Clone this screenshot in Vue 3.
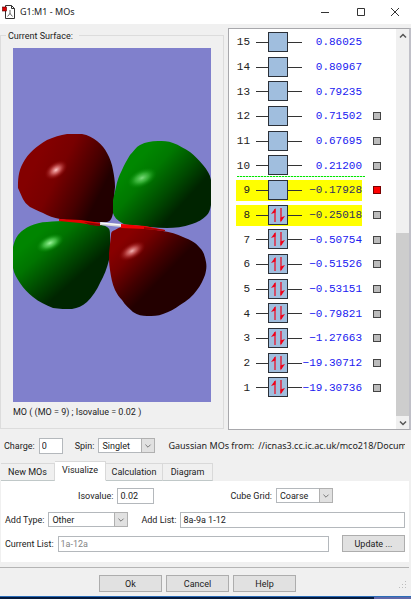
<script setup>
import { ref } from 'vue'

const orbitals = ref([
  { n: 15, energy: '0.86025', pair: false },
  { n: 14, energy: '0.80967', pair: false },
  { n: 13, energy: '0.79235', pair: false },
  { n: 12, energy: '0.71502', pair: false, box: true },
  { n: 11, energy: '0.67695', pair: false, box: true },
  { n: 10, energy: '0.21200', pair: false, box: true },
  { n: 9, energy: '−0.17928', pair: false, box: true, shown: true, lit: true, gap: true },
  { n: 8, energy: '−0.25018', pair: true, box: true, lit: true },
  { n: 7, energy: '−0.50754', pair: true, box: true },
  { n: 6, energy: '−0.51526', pair: true, box: true },
  { n: 5, energy: '−0.53151', pair: true, box: true },
  { n: 4, energy: '−0.79821', pair: true, box: true },
  { n: 3, energy: '−1.27663', pair: true, box: true },
  { n: 2, energy: '−19.30712', pair: true, box: true },
  { n: 1, energy: '−19.30736', pair: true, box: true }
])

const tabs = ['New MOs', 'Visualize', 'Calculation', 'Diagram']
const activeTab = ref('Visualize')
const charge = ref('0')
const isovalue = ref('0.02')
const addList = ref('8a-9a 1-12')
const currentList = ref('1a-12a')
</script>

<template>
  <div class="window">
    <header class="titlebar">
      <svg class="app-icon" width="14" height="15" viewBox="0 0 14 15">
        <path d="M3.5 0.5h6l3 3v10h-9z" fill="#fff" stroke="#333" />
        <path d="M9.500 0.500v3h3" fill="none" stroke="#333" />
        <path d="M8 5v4M8 8.500l-2.500 3M8 8.500l2.500 3" fill="none" stroke="#666" />
        <rect x="0.500" y="2" width="4" height="4" fill="#e00000" stroke="#500" stroke-width="0.600" />
      </svg>
      <h1>G1:M1 - MOs</h1>
      <div class="window-buttons">
        <button aria-label="Minimize"><svg width="10" height="10" viewBox="0 0 10 10"><path d="M1 5.500h8" /></svg></button>
        <button aria-label="Maximize"><svg width="10" height="10" viewBox="0 0 10 10"><path d="M1.500 1.500h7v7h-7z" /></svg></button>
        <button aria-label="Close"><svg width="10" height="10" viewBox="0 0 10 10"><path d="M1 1l8 8M9 1l-8 8" /></svg></button>
      </div>
    </header>

    <main class="top">
      <fieldset class="surface">
        <legend>Current Surface:</legend>
        <svg class="viewport" viewBox="13 48 198 354" preserveAspectRatio="xMidYMid slice">
          <defs>
            <linearGradient id="redTop" gradientUnits="userSpaceOnUse" x1="38" y1="158" x2="102" y2="190">
              <stop offset="0" stop-color="#840000" /><stop offset="0.35" stop-color="#780000" /><stop offset="0.75" stop-color="#480000" /><stop offset="1" stop-color="#220000" />
            </linearGradient>
            <linearGradient id="greenTop" gradientUnits="userSpaceOnUse" x1="138" y1="160" x2="184" y2="202">
              <stop offset="0" stop-color="#008700" /><stop offset="0.3" stop-color="#007800" /><stop offset="0.7" stop-color="#004a00" /><stop offset="1" stop-color="#002400" />
            </linearGradient>
            <linearGradient id="greenLow" gradientUnits="userSpaceOnUse" x1="40" y1="232" x2="79" y2="276">
              <stop offset="0" stop-color="#008500" /><stop offset="0.3" stop-color="#007400" /><stop offset="0.7" stop-color="#004600" /><stop offset="1" stop-color="#002500" />
            </linearGradient>
            <linearGradient id="redLow" gradientUnits="userSpaceOnUse" x1="125" y1="238" x2="164" y2="276">
              <stop offset="0" stop-color="#880000" /><stop offset="0.3" stop-color="#740000" /><stop offset="0.7" stop-color="#420000" /><stop offset="1" stop-color="#230000" />
            </linearGradient>
            <radialGradient id="glowRed">
              <stop offset="0" stop-color="#ffc4c4" /><stop offset="0.4" stop-color="#d86868" stop-opacity="0.8" /><stop offset="1" stop-color="#900000" stop-opacity="0" />
            </radialGradient>
            <radialGradient id="glowGreen">
              <stop offset="0" stop-color="#9cf49c" /><stop offset="0.45" stop-color="#4cc84c" stop-opacity="0.8" /><stop offset="1" stop-color="#008800" stop-opacity="0" />
            </radialGradient>
          </defs>
          <rect x="13" y="48" width="198" height="354" fill="#8080cc" />
          <path fill="url(#redTop)" d="M18 188C18 180 18 172 23 163C28 153 37 146 47 140C54 137 60 135 67 134H82C88 135 93 138 97 141C102 145 105 149 107 153C110 158 112 164 113 170C114 175 115 181 115 187C114 195 114 207 113 213C112 218 111 221 107 222C98 223 87 222 80 221C73 221 66 220 60 219C54 218 48 216 43 213C38 211 34 209 30 207C25 203 24 201 22 197Z" />
          <path fill="url(#greenTop)" d="M116 187C117 181 119 176 122 170C124 165 127 160 130 155C134 151 136 147 140 145C146 142 151 141 158 141C163 141 168 141 173 143C179 145 185 149 190 152C195 156 199 160 203 165C207 170 210 174 211 180V205C210 210 209 213 207 215C202 220 198 222 192 224C183 227 175 228 167 228C155 228 144 226 133 225C128 225 125 225 122 223C117 220 114 217 113 213V200Z" />
          <path fill="url(#greenLow)" d="M13 247C14 243 15 239 18 235C22 230 26 228 30 226C35 224 41 222 47 222C54 221 60 221 67 221C77 221 87 222 97 224C101 225 104 225 107 227C110 229 110 231 110 235C110 244 111 252 109 260C107 268 104 276 100 283C97 290 92 297 87 302C82 306 78 308 72 309C66 309 59 309 53 308C46 305 39 302 33 297C28 293 24 289 20 283C17 278 14 274 13 268Z" />
          <path fill="url(#redLow)" d="M111 235C111 232 112 231 115 230C118 228 120 227 123 227C137 227 150 229 163 231C170 232 177 234 183 237C191 240 196 243 200 248C204 252 205 257 206 262C207 267 206 271 205 275C203 280 201 285 197 290C193 296 187 301 180 305C175 309 169 312 163 314C158 316 153 316 147 316C142 316 138 315 133 312C129 308 125 305 122 300C119 297 117 294 115 290C112 283 111 277 110 270C109 264 109 258 109 253Z" />
          <ellipse cx="56" cy="170" rx="13" ry="8" transform="rotate(-35 56 170)" fill="url(#glowRed)" />
          <ellipse cx="142" cy="178" rx="16" ry="9" transform="rotate(-25 142 178)" fill="url(#glowGreen)" opacity="0.8" />
          <ellipse cx="50" cy="243" rx="15" ry="8" transform="rotate(-25 50 243)" fill="url(#glowGreen)" />
          <ellipse cx="132" cy="251" rx="15" ry="8" transform="rotate(-30 132 251)" fill="url(#glowRed)" opacity="0.9" />
          <path d="M59 219L81 220L101 223L100 226L80 223L59 221Z" fill="#e80000" />
          <path d="M84 222L101 224L100 226L90 225Z" fill="#8c0000" />
          <path d="M100 222L122 224V227L100 225Z" fill="#d8d8d8" />
          <path d="M101 223L122 225" stroke="#fff" />
          <path d="M121 224L145 226L165 230L165 231L145 229L121 228Z" fill="#f00000" />
          <path d="M144 227L165 230V231L144 229Z" fill="#a00000" />
        </svg>
        <p>MO ( (MO = 9) ; Isovalue = 0.02 )</p>
      </fieldset>

      <section class="diagram" aria-label="Orbital energies">
        <ol>
          <li v-for="o in orbitals" :key="o.n" :class="{ gap: o.gap }">
            <div class="level" :class="{ lit: o.lit }">
              <span class="index">{{ o.n }}</span>
              <svg width="46" height="21" viewBox="0 0 46 21">
                <path d="M0 10.500h46" stroke="#333" />
                <rect x="12.500" y="0.500" width="19" height="19" fill="#a0bede" stroke="#2b3038" />
                <g v-if="o.pair" fill="none" stroke="#f00018" stroke-width="1.200">
                  <path d="M19 17V4" /><path d="M19.500 3L15 9L19.500 7.500Z" fill="#f00018" stroke="none" />
                  <path d="M25 3v13" /><path d="M24.500 17.500L29 11L24.500 12.500Z" fill="#f00018" stroke="none" />
                </g>
              </svg>
              <span class="energy">{{ o.energy }}</span>
            </div>
            <input v-if="o.box" v-model="o.shown" type="checkbox" :aria-label="'Orbital ' + o.n" />
          </li>
        </ol>
        <div class="scrollbar">
          <button aria-label="Scroll up"><svg width="8" height="6" viewBox="0 0 8 6"><path d="M1 4.500l3-3l3 3" /></svg></button>
          <div class="track"><div class="thumb"></div></div>
          <button aria-label="Scroll down"><svg width="8" height="6" viewBox="0 0 8 6"><path d="M1 1.500l3 3l3-3" /></svg></button>
        </div>
      </section>
    </main>

    <div class="state">
      <label for="charge">Charge:</label>
      <input id="charge" v-model="charge" class="field charge" />
      <label for="spin" class="spin-label">Spin:</label>
      <span class="combo spin">
        <select id="spin"><option>Singlet</option></select>
        <svg width="14" height="14" viewBox="0 0 14 14"><path d="M4 6l3 3l3-3" /></svg>
      </span>
      <p class="source"><span>Gaussian MOs from:</span><span>//icnas3.cc.ic.ac.uk/mco218/Docum</span></p>
    </div>

    <nav class="tabs" role="tablist">
      <button v-for="t in tabs" :key="t" role="tab" :aria-selected="t === activeTab" :class="{ active: t === activeTab }" @click="activeTab = t">{{ t }}</button>
    </nav>

    <section class="page">
      <div class="row iso-row">
        <label for="iso">Isovalue:</label>
        <input id="iso" v-model="isovalue" class="field iso" />
        <label for="grid" class="grid-label">Cube Grid:</label>
        <span class="combo cube">
          <select id="grid"><option>Coarse</option></select>
          <svg width="14" height="14" viewBox="0 0 14 14"><path d="M4 6l3 3l3-3" /></svg>
        </span>
      </div>
      <div class="row">
        <label for="type">Add Type:</label>
        <span class="combo type">
          <select id="type"><option>Other</option></select>
          <svg width="14" height="14" viewBox="0 0 14 14"><path d="M4 6l3 3l3-3" /></svg>
        </span>
        <label for="add" class="add-label">Add List:</label>
        <input id="add" v-model="addList" class="field wide" />
      </div>
      <div class="row">
        <label for="current">Current List:</label>
        <input id="current" v-model="currentList" class="field wide muted" readonly />
        <button class="push update">Update ...</button>
      </div>
    </section>

    <footer class="actions">
      <button class="push">Ok</button>
      <button class="push">Cancel</button>
      <button class="push">Help</button>
      <svg class="grip" width="8" height="8" viewBox="0 0 8 8" fill="#bcbcbc"><path d="M6 0h1v1h-1zM3 3h1v1h-1zM6 3h1v1h-1zM0 6h1v1h-1zM3 6h1v1h-1zM6 6h1v1h-1z" /></svg>
    </footer>
    <div class="desktop"></div>
  </div>
</template>

<style>
body {
  background: #f0f0f0;
}
</style>

<style scoped>
.window {
  display: flex;
  flex-direction: column;
  min-height: 100vh;
  overflow: hidden;
  background: #f0f0f0;
  color: #222;
  font: 9px/12px Roboto, sans-serif;
}
* {
  box-sizing: border-box;
}
button,
input,
select {
  margin: 0;
  padding: 0;
  font: inherit;
  color: inherit;
  border-radius: 0;
}
p,
h1,
ol {
  margin: 0;
  padding: 0;
}
.titlebar {
  display: flex;
  align-items: center;
  height: 24px;
  padding-left: 2px;
  background: #fff;
}
.titlebar h1 {
  margin-left: 4px;
  font: 9px/12px "Noto Sans", sans-serif;
}
.window-buttons {
  display: flex;
  margin-left: auto;
}
.window-buttons button {
  display: flex;
  align-items: center;
  justify-content: center;
  width: 36px;
  height: 24px;
  border: 0;
  background: none;
}
.window-buttons button:last-child {
  width: 32px;
}
.window-buttons path {
  fill: none;
  stroke: #333;
}
.top {
  display: grid;
  grid-template-columns: 224fr 183fr;
  gap: 4px;
  padding-top: 4px;
}
.surface {
  min-width: 0;
  height: 401px;
  margin: 0;
  padding: 6px 12px 0;
  border: 1px solid #dcdcdc;
}
.surface legend {
  margin-left: -7px;
  padding: 2px 6px 0 2px;
}
.viewport {
  display: block;
  width: 100%;
  height: 354px;
}
.surface p {
  margin-top: 4px;
}
.diagram {
  display: flex;
  height: 402px;
  border: 1px solid #a8a8ac;
  border-right: 2px solid #c0c0c8;
  background: #fff;
}
.diagram ol {
  display: flex;
  flex: 1;
  flex-direction: column;
  height: 371px;
  padding: 1px 0 0 7px;
  list-style: none;
}
.diagram li {
  position: relative;
  display: flex;
  flex: 1;
  align-items: center;
}
.gap::before {
  content: "";
  position: absolute;
  top: -2px;
  left: 1px;
  width: 128px;
  height: 1px;
  background: repeating-linear-gradient(90deg, #00e400 0 2px, #b8ffb8 2px 3px);
}
.level {
  display: flex;
  align-items: center;
  width: 126px;
  height: 21px;
  font: 11px/20px "Liberation Mono", monospace;
}
.level svg {
  flex: none;
  margin-left: 6px;
}
.lit {
  background: #ff0;
}
.index {
  width: 14px;
  text-align: right;
}
.energy {
  flex: 1;
  display: flex;
  justify-content: flex-end;
  color: #2020f0;
}
.lit .energy {
  color: #303060;
}
.diagram li input {
  appearance: none;
  width: 8px;
  height: 8px;
  margin-left: 11px;
  border: 1px solid #444;
  background: #bcbcbc;
}
.diagram li input:checked {
  border-color: #700;
  background: #f00;
}
.scrollbar {
  display: flex;
  flex-direction: column;
  width: 13px;
  background: #f0f0f0;
}
.scrollbar button {
  display: flex;
  align-items: center;
  justify-content: center;
  height: 13px;
  border: 0;
  background: none;
}
.scrollbar path {
  fill: none;
  stroke: #555;
  stroke-width: 1.5;
}
.track {
  display: flex;
  flex: 1;
  flex-direction: column;
  justify-content: flex-end;
}
.thumb {
  height: 49%;
  background: #cdcdcd;
}
.state {
  display: flex;
  align-items: center;
  height: 31px;
  padding: 0 6px 0 4px;
}
.field {
  height: 16px;
  padding: 0 2px;
  border: 1px solid #b4b8bc;
  background: #fff;
  outline: none;
}
.charge {
  width: 24px;
  margin-left: 4px;
}
.spin-label {
  margin-left: 12px;
}
.combo {
  display: grid;
  align-items: center;
  height: 15px;
}
.combo select,
.combo svg {
  grid-area: 1 / 1;
}
.combo select {
  appearance: none;
  width: 100%;
  height: 15px;
  padding: 0 3px;
  border: 1px solid #b4b8bc;
  background: #fff;
}
.combo svg {
  justify-self: end;
  height: 15px;
  border: 1px solid #b0b0b0;
  background: #e1e1e1;
  pointer-events: none;
}
.combo path {
  fill: none;
  stroke: #666;
}
.spin {
  width: 57px;
  margin-left: 4px;
}
.source {
  display: flex;
  flex: 1;
  gap: 4px;
  min-width: 0;
  margin-left: 13px;
  overflow: hidden;
  white-space: nowrap;
  font-family: "Noto Sans", sans-serif;
}
.tabs {
  display: flex;
  align-items: flex-end;
  height: 20px;
  padding-left: 1px;
}
.tabs button {
  width: 57px;
  height: 18px;
  border: 1px solid #d9d9d9;
  border-left: 0;
  border-bottom-color: #c0c8c8;
  background: #f0f0f0;
}
.tabs button:first-child {
  width: 54px;
}
.tabs button:last-child {
  width: 50px;
}
.tabs .active {
  width: 51px;
  height: 20px;
  padding-bottom: 2px;
  border-bottom-color: #fff;
  background: #fff;
}
.page {
  display: flex;
  flex-direction: column;
  gap: 7px;
  height: 81px;
  margin: 0 2px 0 1px;
  padding: 6px 4px 0;
  background: #fff;
}
.row {
  display: flex;
  align-items: center;
  height: 17px;
}
.iso-row {
  padding-left: 73px;
}
.iso {
  width: 37px;
  margin-left: 4px;
}
.grid-label {
  margin-left: 76px;
}
.cube {
  width: 57px;
  margin-left: 4px;
}
.type {
  width: 80px;
  margin-left: 4px;
}
.add-label {
  margin-left: 13px;
}
.wide {
  flex: 1;
  min-width: 0;
  margin-left: 4px;
}
.muted {
  color: #858585;
}
.push {
  width: 63px;
  height: 17px;
  border: 1px solid #adadad;
  background: #e1e1e1;
}
.update {
  margin-left: 13px;
}
.actions {
  display: flex;
  gap: 4px;
  align-items: center;
  justify-content: center;
  position: relative;
  height: 29px;
  margin: 5px 2px 0 0;
  padding: 3px 14px 0 0;
  border-top: 1px solid #b4b4b4;
}
.grip {
  position: absolute;
  right: 2px;
  bottom: 7px;
}
.desktop {
  flex: 1;
  min-height: 3px;
  border-top: 1px solid #2a6cb8;
  background: linear-gradient(90deg, #051a3c 91%, #6068a8 91%);
}
</style>
